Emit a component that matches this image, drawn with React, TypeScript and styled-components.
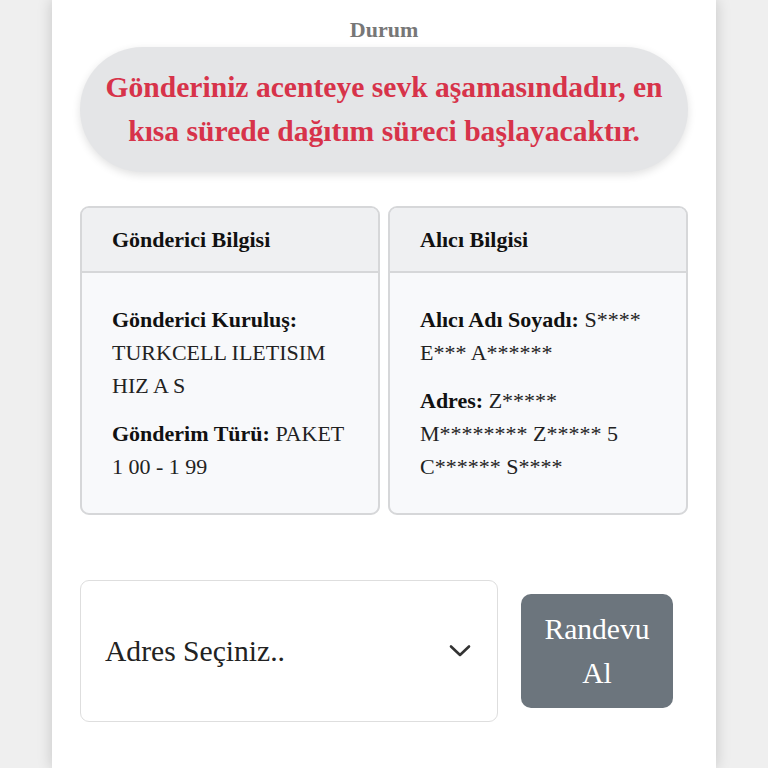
import styled, { createGlobalStyle } from "styled-components";

const GlobalStyle = createGlobalStyle`
    html, body {
        margin: 0;
        padding: 0;
        background-color: #efefef;
        font-family: "Liberation Serif", "Times New Roman", serif;
    }
    * {
        box-sizing: border-box;
    }
`;

const Page = styled.div`
    width: 664px;
    min-height: 768px;
    margin: 0 auto;
    padding: 17px 28px 40px;
    background-color: #ffffff;
    box-shadow: 0 0 14px rgba(0, 0, 0, 0.18);
`;

const StatusLabel = styled.div`
    text-align: center;
    font-size: 22px;
    line-height: 26px;
    font-weight: bold;
    color: #777777;
`;

const StatusPill = styled.div`
    margin-top: 4px;
    padding: 18px 20px 19px;
    border-radius: 64px;
    background-color: #e4e5e7;
    box-shadow: 0 3px 8px rgba(0, 0, 0, 0.12);
    text-align: center;
    font-size: 29.6px;
    line-height: 44px;
    font-weight: bold;
    color: #d7334a;
`;

const CardGrid = styled.div`
    display: grid;
    grid-template-columns: 1fr 1fr;
    gap: 8px;
    margin-top: 34px;
`;

const Card = styled.div`
    display: flex;
    flex-direction: column;
    border: 2px solid #d6d7d9;
    border-radius: 9px;
    overflow: hidden;
    background-color: #f8f9fb;
`;

const CardHeader = styled.div`
    display: flex;
    align-items: center;
    height: 65px;
    padding: 0 30px;
    background-color: #eff0f2;
    border-bottom: 2px solid #d6d7d9;
    font-size: 22px;
    font-weight: bold;
    color: #111111;
`;

const CardBody = styled.div`
    flex: 1;
    display: flex;
    flex-direction: column;
    gap: 15px;
    padding: 30px;
    font-size: 22px;
    line-height: 33px;
    color: #222222;
    p {
        margin: 0;
    }
    b {
        color: #111111;
    }
`;

const ActionRow = styled.div`
    display: flex;
    align-items: center;
    gap: 23px;
    margin-top: 65px;
`;

const AddressSelect = styled.div`
    display: flex;
    align-items: center;
    justify-content: space-between;
    width: 418px;
    height: 142px;
    padding: 0 26px 0 24px;
    border: 1px solid #dedede;
    border-radius: 9px;
    background-color: #ffffff;
    font-size: 29.6px;
    color: #222222;
`;

const AppointmentButton = styled.button`
    width: 152px;
    padding: 13px 10px;
    border: none;
    border-radius: 10px;
    background-color: #6c757d;
    color: #ffffff;
    font-family: inherit;
    font-size: 29.6px;
    line-height: 44px;
    cursor: pointer;
`;

const Chevron = () => (
    <svg width="22" height="14" viewBox="0 0 22 14" fill="none">
        <path d="M2 2.5 L11 11 L20 2.5" stroke="#333333" strokeWidth="2.6" strokeLinecap="round" strokeLinejoin="round" />
    </svg>
);

const App = (): JSX.Element => {
    return (
        <>
            <GlobalStyle />
            <Page>
                <StatusLabel>Durum</StatusLabel>
                <StatusPill>
                    Gönderiniz acenteye sevk aşamasındadır, en kısa sürede dağıtım süreci başlayacaktır.
                </StatusPill>
                <CardGrid>
                    <Card>
                        <CardHeader>Gönderici Bilgisi</CardHeader>
                        <CardBody>
                            <p><b>Gönderici Kuruluş:</b> TURKCELL ILETISIM HIZ A S</p>
                            <p><b>Gönderim Türü:</b> PAKET 1 00 - 1 99</p>
                        </CardBody>
                    </Card>
                    <Card>
                        <CardHeader>Alıcı Bilgisi</CardHeader>
                        <CardBody>
                            <p><b>Alıcı Adı Soyadı:</b> S**** E*** A******</p>
                            <p><b>Adres:</b> Z***** M******** Z***** 5 C****** S****</p>
                        </CardBody>
                    </Card>
                </CardGrid>
                <ActionRow>
                    <AddressSelect>
                        <span>Adres Seçiniz..</span>
                        <Chevron />
                    </AddressSelect>
                    <AppointmentButton>Randevu Al</AppointmentButton>
                </ActionRow>
            </Page>
        </>
    );
};

export default App;
